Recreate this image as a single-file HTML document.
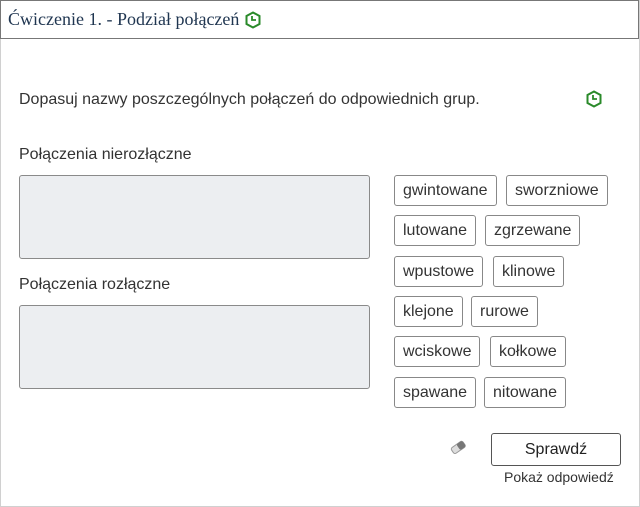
<!DOCTYPE html><html><head><style>
body{margin:0;width:640px;height:507px;background:#fff;font-family:"Liberation Sans",sans-serif;color:#333;position:relative;overflow:hidden}
.outer{position:absolute;left:0;top:0;width:638px;height:505px;border:1px solid #d0d0d0}
.hdr{position:absolute;left:0;top:0;width:637px;height:37px;border:1px solid #777;font-family:"Liberation Serif",serif;font-size:18px;color:#1f3550}
.hdr span{position:absolute;left:7px;top:8px}
.t{position:absolute;font-size:16px;color:#333;white-space:nowrap}
.box{position:absolute;left:19px;width:349px;height:82px;background:#eceef1;border:1px solid #8a8a8a;border-radius:3px}
.c{position:absolute;height:29px;border:1px solid #888;border-radius:3px;font-size:16px;line-height:29px;padding:0 8px;color:#333;background:#fff;white-space:nowrap}
.btn{position:absolute;left:491px;top:433px;width:128px;height:31px;border:1px solid #555;border-radius:3px;text-align:center;line-height:31px;font-size:16px;color:#222}
</style></head><body>
<div class="outer"></div>
<div class="hdr"><span>Ćwiczenie 1. - Podział połączeń</span>
<svg style="position:absolute;left:243px;top:10px" width="18" height="18" viewBox="0 0 18 18"><polygon points="9,1.5 15.5,5 15.5,13 9,16.5 2.5,13 2.5,5" fill="none" stroke="#2a8a2a" stroke-width="2"/><path d="M8 5v4h4" fill="none" stroke="#2a8a2a" stroke-width="1.8"/></svg></div>
<div class="t" style="left:19px;top:91px">Dopasuj nazwy poszczególnych połączeń do odpowiednich grup.</div>
<svg style="position:absolute;left:585px;top:90px" width="18" height="18" viewBox="0 0 18 18"><polygon points="9,1.5 15.5,5 15.5,13 9,16.5 2.5,13 2.5,5" fill="none" stroke="#2a8a2a" stroke-width="2"/><path d="M8 5v4h4" fill="none" stroke="#2a8a2a" stroke-width="1.8"/></svg>
<div class="t" style="left:19px;top:146px">Połączenia nierozłączne</div>
<div class="box" style="top:175px"></div>
<div class="t" style="left:19px;top:276px">Połączenia rozłączne</div>
<div class="box" style="top:305px"></div>
<div class="c" style="left:394px;top:175px">gwintowane</div>
<div class="c" style="left:506px;top:175px">sworzniowe</div>
<div class="c" style="left:394px;top:215px">lutowane</div>
<div class="c" style="left:485px;top:215px">zgrzewane</div>
<div class="c" style="left:394px;top:256px">wpustowe</div>
<div class="c" style="left:493px;top:256px">klinowe</div>
<div class="c" style="left:394px;top:296px">klejone</div>
<div class="c" style="left:471px;top:296px">rurowe</div>
<div class="c" style="left:394px;top:336px">wciskowe</div>
<div class="c" style="left:490px;top:336px">kołkowe</div>
<div class="c" style="left:394px;top:377px">spawane</div>
<div class="c" style="left:484px;top:377px">nitowane</div>
<svg style="position:absolute;left:449px;top:440px" width="18" height="14" viewBox="0 0 18 14"><g transform="rotate(-35 9 7)"><rect x="2" y="4" width="14" height="7" rx="2" fill="#ddd" stroke="#999"/><rect x="9" y="4" width="7" height="7" rx="2" fill="#777"/></g></svg>
<div class="btn">Sprawdź</div>
<div class="t" style="left:504px;top:469px;font-size:14px;color:#333">Pokaż odpowiedź</div>
</body></html>
